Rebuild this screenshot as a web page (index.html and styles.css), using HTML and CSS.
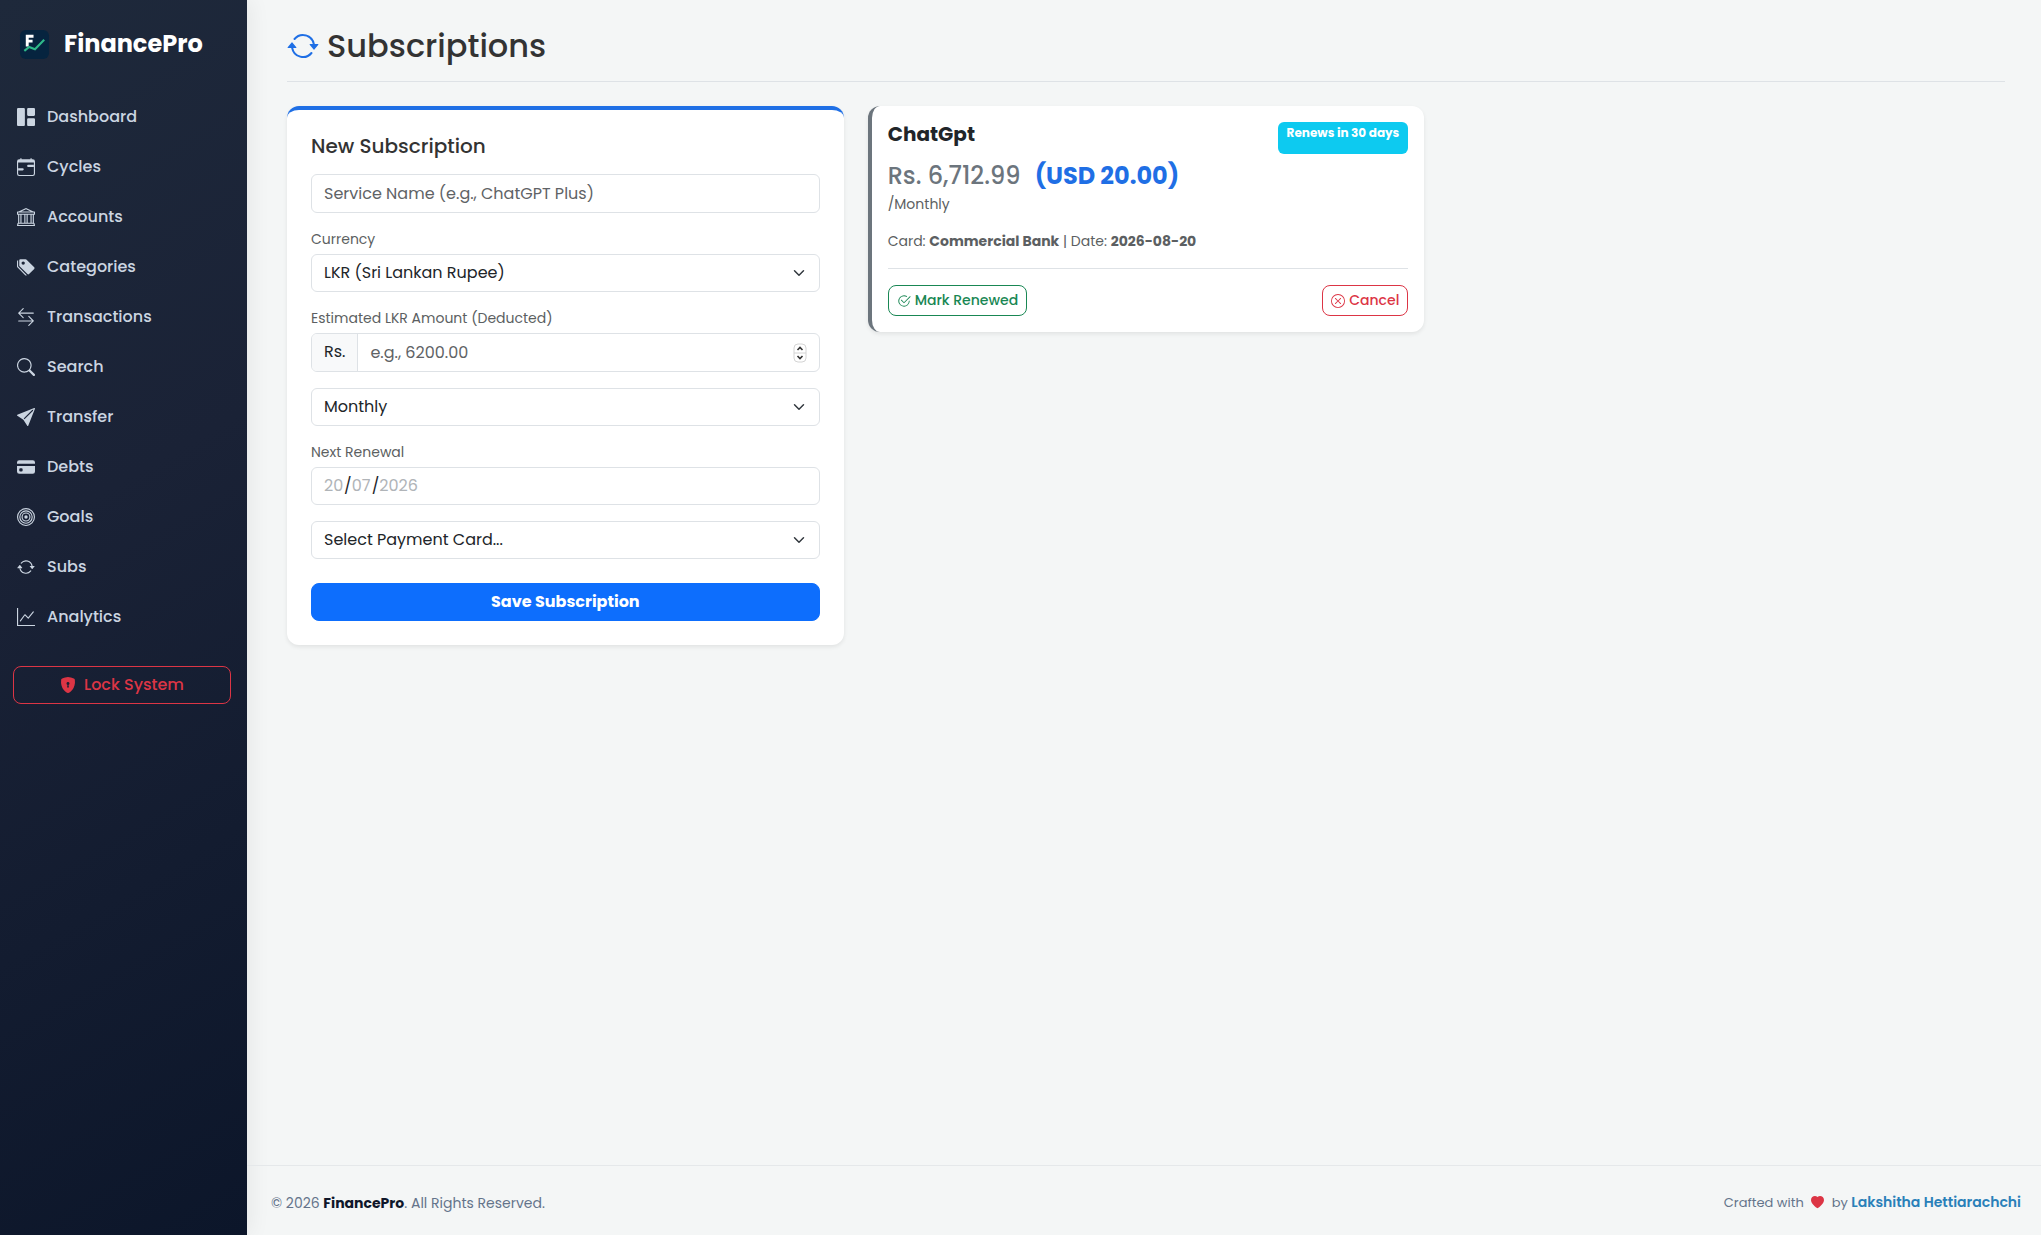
FILE: index.html
```html
<!DOCTYPE html>
<html lang="en">
<head>
<meta charset="utf-8">
<title>Subscriptions - FinancePro</title>
<meta name="viewport" content="width=device-width, initial-scale=1">
<link rel="stylesheet" href="styles.css">
</head>
<body>
<aside class="sidebar">
  <a class="brand" href="#">
    <svg class="brand-logo" viewBox="0 0 32 32" aria-hidden="true">
      <rect x="1" y="1" width="30" height="30" rx="6" fill="#06243f"/>
      <path d="M8.500 18V7.500H15M8.500 12.500H14" fill="none" stroke="#fff" stroke-width="3"/>
      <path d="M5.500 22.500l5-4 6 2.500L26 11" fill="none" stroke="#2fb98a" stroke-width="2.200"/>
    </svg>
    <span>FinancePro</span>
  </a>
  <nav class="menu">
    <a href="#"><svg class="icon" viewBox="0 0 16 16"><path d="M0 1a1 1 0 0 1 1-1h5a1 1 0 0 1 1 1v14a1 1 0 0 1-1 1H1a1 1 0 0 1-1-1zm9 0a1 1 0 0 1 1-1h5a1 1 0 0 1 1 1v5a1 1 0 0 1-1 1h-5a1 1 0 0 1-1-1zm0 9a1 1 0 0 1 1-1h5a1 1 0 0 1 1 1v5a1 1 0 0 1-1 1h-5a1 1 0 0 1-1-1z"/></svg>Dashboard</a>
    <a href="#"><svg class="icon" viewBox="0 0 16 16"><path d="M9 7a1 1 0 0 1 1-1h5v2h-5a1 1 0 0 1-1-1M1 9h4a1 1 0 0 1 0 2H1z"/><path d="M3.500 0a.5.5 0 0 1 .5.5V1h8V.5a.5.5 0 0 1 1 0V1h1a2 2 0 0 1 2 2v11a2 2 0 0 1-2 2H2a2 2 0 0 1-2-2V3a2 2 0 0 1 2-2h1V.5a.5.5 0 0 1 .5-.5M1 4v10a1 1 0 0 0 1 1h12a1 1 0 0 0 1-1V4z"/></svg>Cycles</a>
    <a href="#"><svg class="icon" viewBox="0 0 16 16"><path d="m8 0 6.610 3h.89a.5.5 0 0 1 .5.5v2a.5.5 0 0 1-.5.5H15v7a.5.5 0 0 1 .485.380l.5 2a.498.498 0 0 1-.485.620H.5a.498.498 0 0 1-.485-.620l.5-2A.5.5 0 0 1 1 13V6H.5a.5.5 0 0 1-.5-.5v-2A.5.5 0 0 1 .5 3h.89zM3.777 3h8.447L8 1zM2 6v7h1V6zm2 0v7h2.500V6zm3.500 0v7h1V6zm2 0v7H12V6zM13 6v7h1V6zm2-1V4H1v1zm-.39 9H1.390l-.25 1h13.720z"/></svg>Accounts</a>
    <a href="#"><svg class="icon" viewBox="0 0 16 16"><path d="M2 2a1 1 0 0 1 1-1h4.586a1 1 0 0 1 .707.293l7 7a1 1 0 0 1 0 1.414l-4.586 4.586a1 1 0 0 1-1.414 0l-7-7A1 1 0 0 1 2 6.586zm3.500 4a1.500 1.500 0 1 0 0-3 1.500 1.500 0 0 0 0 3"/><path d="M1.293 7.793A1 1 0 0 1 1 7.086V2a1 1 0 0 0-1 1v4.586a1 1 0 0 0 .293.707l7 7a1 1 0 0 0 1.414 0l.043-.043z"/></svg>Categories</a>
    <a href="#"><svg class="icon" viewBox="0 0 16 16"><path d="M1 11.500a.5.5 0 0 0 .5.5h11.793l-3.147 3.146a.5.5 0 0 0 .708.708l4-4a.5.5 0 0 0 0-.708l-4-4a.5.5 0 0 0-.708.708L13.293 11H1.500a.5.5 0 0 0-.5.5m14-7a.5.5 0 0 1-.5.5H2.707l3.147 3.146a.5.5 0 1 1-.708.708l-4-4a.5.5 0 0 1 0-.708l4-4a.5.5 0 1 1 .708.708L2.707 4H14.500a.5.5 0 0 1 .5.5"/></svg>Transactions</a>
    <a href="#"><svg class="icon" viewBox="0 0 16 16"><path d="M11.742 10.344a6.500 6.500 0 1 0-1.397 1.398h-.001q.044.060.098.115l3.850 3.850a1 1 0 0 0 1.415-1.414l-3.850-3.850a1 1 0 0 0-.115-.1zM12 6.500a5.500 5.500 0 1 1-11 0 5.500 5.500 0 0 1 11 0"/></svg>Search</a>
    <a href="#"><svg class="icon" viewBox="0 0 16 16"><path d="M15.964.686a.5.5 0 0 0-.65-.65L.767 5.855H.766l-.452.180a.5.5 0 0 0-.082.887l.410.260.001.002 4.995 3.178 3.178 4.995.002.002.260.410a.5.5 0 0 0 .886-.083zm-1.833 1.890L6.637 10.070l-.215-.338a.5.5 0 0 0-.154-.154l-.338-.215 7.494-7.494 1.178-.471z"/></svg>Transfer</a>
    <a href="#"><svg class="icon" viewBox="0 0 16 16"><path d="M0 4a2 2 0 0 1 2-2h12a2 2 0 0 1 2 2v1H0zm0 3v5a2 2 0 0 0 2 2h12a2 2 0 0 0 2-2V7zm3 2h1a1 1 0 0 1 1 1v1a1 1 0 0 1-1 1H3a1 1 0 0 1-1-1v-1a1 1 0 0 1 1-1"/></svg>Debts</a>
    <a href="#"><svg class="icon" viewBox="0 0 16 16"><g fill="none" stroke="currentColor"><circle cx="8" cy="8" r="7.500"/><circle cx="8" cy="8" r="5.500"/><circle cx="8" cy="8" r="3.500"/></g><circle cx="8" cy="8" r="1.500"/></svg>Goals</a>
    <a href="#"><svg class="icon" viewBox="0 0 16 16"><path d="M11.534 7h3.932a.25.25 0 0 1 .192.410l-1.966 2.360a.25.25 0 0 1-.384 0l-1.966-2.360a.25.25 0 0 1 .192-.410m-11 2h3.932a.25.25 0 0 0 .192-.410L2.692 6.230a.25.25 0 0 0-.384 0L.342 8.590A.25.25 0 0 0 .534 9"/><path d="M8 3c-1.552 0-2.940.707-3.857 1.818a.5.5 0 1 1-.771-.636A6.002 6.002 0 0 1 13.917 7H12.900A5 5 0 0 0 8 3M3.100 9a5.002 5.002 0 0 0 8.757 2.182.5.5 0 1 1 .771.636A6.002 6.002 0 0 1 2.083 9z"/></svg>Subs</a>
    <a href="#"><svg class="icon" viewBox="0 0 16 16"><path d="M0 0h1v15h15v1H0zm14.817 3.113a.5.5 0 0 1 .070.704l-4.500 5.500a.5.5 0 0 1-.740.037L7.060 6.767l-3.656 5.027a.5.5 0 0 1-.808-.588l4-5.500a.5.5 0 0 1 .758-.060l2.609 2.610 4.150-5.073a.5.5 0 0 1 .704-.070"/></svg>Analytics</a>
  </nav>
  <button class="btn lock" type="button"><svg class="icon-sm" viewBox="0 0 16 16"><path fill-rule="evenodd" d="M8 0c-.69 0-1.843.265-2.928.560-1.110.300-2.229.655-2.887.870a1.540 1.540 0 0 0-1.044 1.262c-.596 4.477.787 7.795 2.465 9.990a11.800 11.800 0 0 0 2.517 2.453c.386.273.744.482 1.048.625.280.132.581.240.829.240s.548-.108.829-.240a7 7 0 0 0 1.048-.625 11.800 11.800 0 0 0 2.517-2.453c1.678-2.195 3.061-5.513 2.465-9.990a1.540 1.540 0 0 0-1.044-1.263 63 63 0 0 0-2.887-.870C9.843.266 8.690 0 8 0m0 5a1.500 1.500 0 0 1 .5 2.915l.385 1.990a.5.5 0 0 1-.491.595h-.788a.5.5 0 0 1-.490-.595l.384-1.990A1.500 1.500 0 0 1 8 5"/></svg>Lock System</button>
</aside>
<div class="page">
  <main class="content">
    <header class="page-head">
      <svg class="icon-lg" viewBox="0 0 16 16"><path d="M11.534 7h3.932a.25.25 0 0 1 .192.410l-1.966 2.360a.25.25 0 0 1-.384 0l-1.966-2.360a.25.25 0 0 1 .192-.410m-11 2h3.932a.25.25 0 0 0 .192-.410L2.692 6.230a.25.25 0 0 0-.384 0L.342 8.590A.25.25 0 0 0 .534 9"/><path d="M8 3c-1.552 0-2.940.707-3.857 1.818a.5.5 0 1 1-.771-.636A6.002 6.002 0 0 1 13.917 7H12.900A5 5 0 0 0 8 3M3.100 9a5.002 5.002 0 0 0 8.757 2.182.5.5 0 1 1 .771.636A6.002 6.002 0 0 1 2.083 9z"/></svg>
      <h1>Subscriptions</h1>
    </header>
    <div class="columns">
      <form class="card form-card">
        <h2>New Subscription</h2>
        <input class="control" type="text" placeholder="Service Name (e.g., ChatGPT Plus)" aria-label="Service Name">
        <div class="field">
          <label for="currency">Currency</label>
          <select class="control" id="currency"><option>LKR (Sri Lankan Rupee)</option><option>USD (US Dollar)</option></select>
        </div>
        <div class="field">
          <label for="amount">Estimated LKR Amount (Deducted)</label>
          <div class="control group">
            <span class="prefix">Rs.</span>
            <input id="amount" type="number" step="0.01" placeholder="e.g., 6200.00">
            <svg class="stepper" viewBox="0 0 14 20" aria-hidden="true"><rect x="1" y="1" width="12" height="18" rx="4" fill="#fff" stroke="#d4d4d4"/><path d="M1 10h12" stroke="#d4d4d4"/><path d="M4.500 7 7 4.500 9.500 7M4.500 13 7 15.500 9.500 13" fill="none" stroke="#333" stroke-width="1.600"/></svg>
          </div>
        </div>
        <select class="control" aria-label="Billing cycle"><option>Monthly</option><option>Yearly</option></select>
        <div class="field">
          <label for="day">Next Renewal</label>
          <div class="control date">
            <input class="two" id="day" type="text" inputmode="numeric" placeholder="20" aria-label="Next Renewal day"><span>/</span><input class="two" type="text" inputmode="numeric" placeholder="07" aria-label="Next Renewal month"><span>/</span><input class="four" type="text" inputmode="numeric" placeholder="2026" aria-label="Next Renewal year">
          </div>
        </div>
        <select class="control" aria-label="Payment card"><option>Select Payment Card...</option></select>
        <button class="btn save" type="submit">Save Subscription</button>
      </form>
      <article class="card sub-card">
        <div class="sub-top">
          <h2>ChatGpt</h2>
          <span class="badge">Renews in 30 days</span>
        </div>
        <p class="price">Rs. 6,712.99 <strong>(USD 20.00)</strong></p>
        <p class="cycle">/Monthly</p>
        <p class="meta">Card: <strong>Commercial Bank</strong> | Date: <strong>2026-08-20</strong></p>
        <div class="actions">
          <button class="btn small success" type="button"><svg class="icon-xs" viewBox="0 0 16 16"><path d="M2.500 8a5.500 5.500 0 0 1 8.250-4.764.5.5 0 0 0 .5-.866A6.500 6.500 0 1 0 14.500 8a.5.5 0 0 0-1 0 5.500 5.500 0 1 1-11 0"/><path d="M15.354 3.354a.5.5 0 0 0-.708-.708L8 9.293 5.354 6.646a.5.5 0 1 0-.708.708l3 3a.5.5 0 0 0 .708 0z"/></svg>Mark Renewed</button>
          <button class="btn small danger" type="button"><svg class="icon-xs" viewBox="0 0 16 16"><path d="M8 15A7 7 0 1 1 8 1a7 7 0 0 1 0 14m0 1A8 8 0 1 0 8 0a8 8 0 0 0 0 16"/><path d="M4.646 4.646a.5.5 0 0 1 .708 0L8 7.293l2.646-2.647a.5.5 0 0 1 .708.708L8.707 8l2.647 2.646a.5.5 0 0 1-.708.708L8 8.707l-2.646 2.647a.5.5 0 0 1-.708-.708L7.293 8 4.646 5.354a.5.5 0 0 1 0-.708"/></svg>Cancel</button>
        </div>
      </article>
    </div>
  </main>
  <footer class="footer">
    <p>© 2026 <strong>FinancePro</strong>. All Rights Reserved.</p>
    <p class="credit">Crafted with <svg class="heart" viewBox="0 0 16 16" role="img" aria-label="love"><path fill-rule="evenodd" d="M8 1.314C12.438-3.248 23.534 4.735 8 15-7.534 4.736 3.562-3.248 8 1.314"/></svg> by <a href="#">Lakshitha Hettiarachchi</a></p>
  </footer>
</div>
</body>
</html>
```

FILE: styles.css
```css
*, *::before, *::after { box-sizing: border-box; }

body {
  margin: 0;
  min-height: 100vh;
  display: flex;
  background: #f4f6f6;
  color: #333;
  font: 400 16px/24px Poppins, Inter, sans-serif;
}

h1, h2, p { margin: 0; }
svg { flex: none; fill: currentColor; }
input, select, button { font: inherit; color: inherit; }

/* Sidebar */
.sidebar {
  flex: 0 0 247px;
  padding: 20px 16px 20px 13px;
  background: linear-gradient(150deg, #1e293b 0%, #1a2236 40%, #0c162a 100%);
  box-shadow: 4px 0 20px rgba(0, 0, 0, .06);
}
.brand {
  display: flex;
  align-items: center;
  gap: 14px;
  height: 48px;
  padding-left: 6px;
  color: #fff;
  font-size: 24px;
  font-weight: 700;
  text-decoration: none;
}
.brand-logo { width: 31px; height: 31px; }
.menu { padding-top: 24px; }
.menu a {
  display: flex;
  align-items: center;
  gap: 12px;
  height: 50px;
  padding-left: 4px;
  color: #cbd5e1;
  font-weight: 500;
  text-decoration: none;
}
.icon { width: 18px; height: 18px; }
.icon-sm { width: 16px; height: 16px; }
.icon-xs { width: 14px; height: 14px; }
.icon-lg { width: 32px; height: 32px; color: #1f6fe5; }

.btn {
  display: flex;
  align-items: center;
  justify-content: center;
  gap: 8px;
  height: 38px;
  border: 1px solid;
  border-radius: 8px;
  background: none;
  font-weight: 500;
  cursor: pointer;
}
.lock { width: 100%; margin-top: 24px; color: #dc3545; }

/* Page */
.page {
  flex: 1;
  min-width: 0;
  display: flex;
  flex-direction: column;
}
.content { flex: 1; padding: 24px 36px 24px 40px; }
.page-head {
  display: flex;
  align-items: center;
  gap: 8px;
  height: 58px;
  padding-bottom: 13px;
  border-bottom: 1px solid #dee2e6;
}
h1 { font-size: 32px; line-height: 40px; font-weight: 500; }
h2 { font-size: 20px; line-height: 24px; font-weight: 500; }
.columns {
  display: grid;
  grid-template-columns: repeat(3, 1fr);
  align-items: start;
  gap: 24px;
  padding-top: 24px;
}
.card {
  border-radius: 12px;
  background: #fff;
  box-shadow: 0 2px 4px rgba(0, 0, 0, .08);
}

/* New subscription form */
.form-card {
  display: flex;
  flex-direction: column;
  gap: 16px;
  padding: 24px;
  border-top: 4px solid #1f6fe5;
}
.control {
  display: block;
  width: 100%;
  height: 39px;
  padding: 0 12px;
  border: 1px solid #dee2e6;
  border-radius: 6px;
  background: #fff;
  color: #212529;
}
select.control, .date.control { height: 38px; }
select.control {
  appearance: none;
  background: #fff url("data:image/svg+xml,%3Csvg xmlns='http://www.w3.org/2000/svg' viewBox='0 0 16 16'%3E%3Cpath fill='none' stroke='%23343a40' stroke-linecap='round' stroke-linejoin='round' stroke-width='2' d='m2 5 6 6 6-6'/%3E%3C/svg%3E") no-repeat right 14px center / 12px 12px;
}
::placeholder { color: #5f6366; opacity: 1; }
.field label {
  display: block;
  margin-bottom: 4px;
  color: #5c5f62;
  font-size: 14px;
  line-height: 21px;
}
.group { display: flex; align-items: center; padding: 0 12px 0 0; }
.prefix {
  align-self: stretch;
  padding: 6px 12px;
  border-right: 1px solid #dee2e6;
  border-radius: 5px 0 0 5px;
  background: #f8f9fa;
}
.group input, .date input {
  min-width: 0;
  padding: 0;
  border: 0;
  background: none;
  outline: 0;
}
.group input { flex: 1; padding-left: 12px; appearance: textfield; }
.stepper { width: 14px; height: 20px; }
.date { display: flex; align-items: center; }
.date ::placeholder { color: #b0b4b8; }
.two { width: 20px; }
.four { width: 42px; }
.save { margin-top: 8px; border-color: #0d6efd; background: #0d6efd; color: #fff; font-weight: 700; }

/* Subscription card */
.sub-card { padding: 16px; border-left: 4px solid #6c757d; }
.sub-top { display: flex; justify-content: space-between; height: 32px; margin-bottom: 7px; }
.sub-top h2 { color: #212529; font-weight: 700; }
.badge {
  padding: 5px 9px;
  border-radius: 6px;
  background: #0dcaf0;
  color: #fff;
  font-size: 12px;
  line-height: 12px;
  font-weight: 700;
}
.price { color: #6c757d; font-size: 24px; line-height: 30px; font-weight: 500; }
.price strong { margin-left: 8px; color: #1f6fe5; font-weight: 700; }
.cycle, .meta { color: #5c5f62; font-size: 14px; line-height: 21px; }
.cycle { padding-top: 3px; }
.meta { padding: 16px 0; }
.actions {
  display: flex;
  justify-content: space-between;
  padding-top: 16px;
  border-top: 1px solid #dee2e6;
}
.small { gap: 4px; height: 31px; padding: 0 8px; font-size: 14px; line-height: 21px; }
.success { color: #198754; }
.danger { color: #dc3545; }

/* Footer */
.footer {
  display: flex;
  align-items: center;
  justify-content: space-between;
  padding: 24px 20px 20px 24px;
  border-top: 1px solid #e5e8ea;
  color: #64748b;
  font-size: 14px;
}
.footer strong { color: #0f172a; }
.credit { font-size: 13px; }
.credit a { color: #2980b9; font-size: 14px; font-weight: 600; text-decoration: none; }
.heart { width: 13px; height: 13px; margin: 0 4px; color: #dc3545; vertical-align: -2px; }
```
